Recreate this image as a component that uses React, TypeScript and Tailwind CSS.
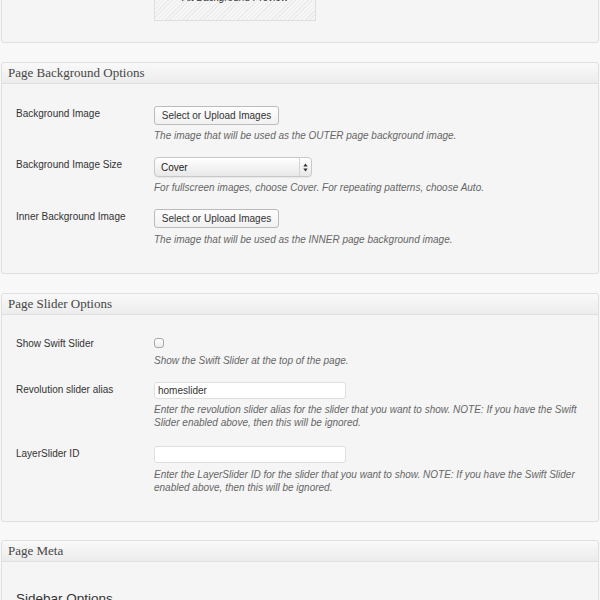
import React from 'react'

const sans = { fontFamily: '"Liberation Sans", Arial, sans-serif' }

function Panel({ title, children, className = '' }: { title: string; children: React.ReactNode; className?: string }) {
  return (
    <div className={`border border-[#dfdfdf] rounded-[3px] bg-[#f5f5f5] ${className}`}>
      <div className="h-[21px] flex items-center pl-[6px] pb-[2px] border-b border-[#dfdfdf] rounded-t-[3px] bg-[linear-gradient(to_bottom,#f9f9f9,#ececec)]">
        <h3 className="text-[13px] leading-none text-[#464646]" style={{ fontFamily: '"Liberation Serif", Georgia, serif' }}>
          {title}
        </h3>
      </div>
      {children}
    </div>
  )
}

function Row({ label, children, className = '' }: { label: string; children: React.ReactNode; className?: string }) {
  return (
    <div className={`flex pl-[14px] ${className}`}>
      <div className="w-[138px] shrink-0 pt-[1px] text-[10px] leading-[14px] text-[#333]">{label}</div>
      <div className="w-[430px]">{children}</div>
    </div>
  )
}

function Desc({ children, className = '' }: { children: React.ReactNode; className?: string }) {
  return <p className={`text-[10px] leading-[13px] italic text-[#666] ${className}`}>{children}</p>
}

function UploadButton() {
  return (
    <button className="w-[125px] h-[19px] rounded-[3px] border border-[#bbb] bg-[linear-gradient(to_bottom,#fefefe,#f1f1f1)] text-[10px] text-[#333] flex items-center justify-center">
      Select or Upload Images
    </button>
  )
}

function TextField({ value }: { value: string }) {
  return (
    <div className="w-[192px] h-[17px] rounded-[3px] border border-[#dfdfdf] bg-white flex items-center pl-[3px] text-[10px] text-[#333]">
      {value}
    </div>
  )
}

export default function App() {
  return (
    <div className="h-[600px] overflow-hidden bg-[#f8f8f8] px-px" style={sans}>
      {/* cut-off panel above */}
      <div className="-mt-[60px] border border-[#dfdfdf] rounded-[3px] bg-[#f5f5f5] pb-[21px]">
        <div className="flex pl-[152px]">
          <div className="w-[162px] h-[80px] border border-[#dedede] bg-[repeating-linear-gradient(135deg,#f6f6f6_0px,#f6f6f6_2px,#ebebeb_2px,#ebebeb_3px)] flex items-end justify-center pb-[16px]">
            <span className="text-[10px] leading-[13px] text-[#333]">Alt Background Preview</span>
          </div>
        </div>
      </div>

      <Panel title="Page Background Options" className="mt-[19px]">
        <div className="pt-[22px] pb-[27px]">
          <Row label="Background Image">
            <UploadButton />
            <Desc className="mt-[4px]">The image that will be used as the OUTER page background image.</Desc>
          </Row>
          <Row label="Background Image Size" className="mt-[15px]">
            <div className="w-[158px] h-[20px] rounded-[4px] border border-[#c8c8c8] bg-[linear-gradient(to_bottom,#ffffff,#e8e8e8)] flex items-center shadow-[0_1px_1px_rgba(0,0,0,0.06)]">
              <span className="flex-1 pl-[6px] text-[10px] text-[#222]">Cover</span>
              <div className="w-[12px] h-full border-l border-[#d6d6d6] flex items-center justify-center">
                <svg width="5" height="9" viewBox="0 0 5 9">
                  <path d="M2.5 0.5 L4.7 3.5 L0.3 3.5 Z" fill="#333" />
                  <path d="M2.5 8.5 L4.7 5.5 L0.3 5.5 Z" fill="#333" />
                </svg>
              </div>
            </div>
            <Desc className="mt-[4px]">For fullscreen images, choose Cover. For repeating patterns, choose Auto.</Desc>
          </Row>
          <Row label="Inner Background Image" className="mt-[15px]">
            <UploadButton />
            <Desc className="mt-[5px]">The image that will be used as the INNER page background image.</Desc>
          </Row>
        </div>
      </Panel>

      <Panel title="Page Slider Options" className="mt-[19px]">
        <div className="pt-[21px] pb-[27px]">
          <Row label="Show Swift Slider">
            <div className="mt-[2px] w-[10px] h-[10px] rounded-[3px] border border-[#a9a9a9] bg-[linear-gradient(to_bottom,#ffffff,#ececec)]" />
            <Desc className="mt-[6px]">Show the Swift Slider at the top of the page.</Desc>
          </Row>
          <Row label="Revolution slider alias" className="mt-[15px]">
            <TextField value="homeslider" />
            <Desc className="mt-[4px]">
              Enter the revolution slider alias for the slider that you want to show. NOTE: If you have the Swift Slider enabled above, then this will be ignored.
            </Desc>
          </Row>
          <Row label="LayerSlider ID" className="mt-[17px]">
            <TextField value="" />
            <Desc className="mt-[5px]">
              Enter the LayerSlider ID for the slider that you want to show. NOTE: If you have the Swift Slider enabled above, then this will be ignored.
            </Desc>
          </Row>
        </div>
      </Panel>

      <Panel title="Page Meta" className="mt-[18px]">
        <div className="pt-[29px] pl-[14px] pb-[40px]">
          <h4 className="text-[13.5px] leading-[16px] text-[#333]">Sidebar Options</h4>
        </div>
      </Panel>
    </div>
  )
}
